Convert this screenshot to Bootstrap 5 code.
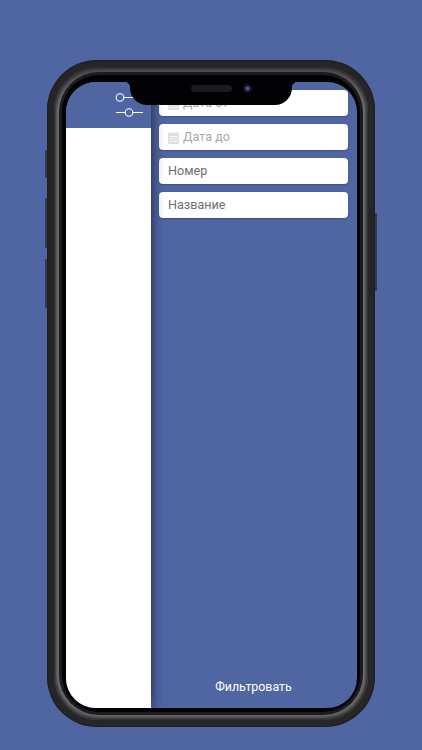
<!DOCTYPE html>
<html lang="ru">
<head>
<meta charset="utf-8">
<title>Фильтр</title>
<link href="https://cdn.jsdelivr.net/npm/bootstrap@5.3.0/dist/css/bootstrap.min.css" rel="stylesheet">
<style>
html,body{height:750px;overflow:hidden}
body{background:#4f66a3;font-family:Roboto,"Liberation Sans",sans-serif}
.stage{padding-top:60px}
.ph-outer{position:relative;width:328px;height:667px;border-radius:50px;background:#262628;padding:7px;box-shadow:inset 0 0 2px #111}
.ph-band{height:100%;border-radius:44px;background:linear-gradient(180deg,#4a4a4d 0,#6e6e71 6%,#6e6e71 94%,#626265 100%);padding:5px;box-shadow:inset 0 0 3px 2px #2c2c2e}
.ph-dark{height:100%;border-radius:40px;background:#1c1c1e;padding:3px}
.ph-black{height:100%;border-radius:37px;background:#020204;padding:7px 3px 4px 4px}
.screen{position:relative;width:291px;height:626px;border-radius:30px;overflow:hidden;background:#4f66a3}
.side-pane{width:85px;position:relative;z-index:1;box-shadow:1px 0 11px rgba(15,15,30,.7)}
.side-head{height:46px;background:#4f66a3;padding:8px 7px 0 0}
.side-body{background:#fff}
.filter-pane{padding:8px 9px 8px 8px}
.field-box{height:26px;padding:0 9px;border:0;border-radius:4px;background:#fff;color:#6f6f6f;font-size:12.6px;line-height:26px;box-shadow:0 1px 2px rgba(0,0,0,.2)}
.field-hint{color:#a8a8a8}
.cal-ico{width:11px;height:13px;flex:none}
.apply-btn{color:#fff;font-size:12.4px;line-height:16px;padding:5px 10px;border:0}
.apply-btn:hover{color:#fff}
.notch{position:absolute;z-index:3;top:0;left:64px;width:162px;height:23px;background:#020204;border-radius:0 0 17px 17px}
.notch::before,.notch::after{content:"";position:absolute;top:0;width:6px;height:6px}
.notch::before{left:-6px;background:radial-gradient(circle at 0 100%,transparent 6px,#020204 6.5px)}
.notch::after{right:-6px;background:radial-gradient(circle at 100% 100%,transparent 6px,#020204 6.5px)}
.speaker{position:absolute;left:61px;top:3px;width:41px;height:7px;border-radius:4px;background:#1b1b1f}
.camera{position:absolute;left:113px;top:2px;width:9px;height:9px;border-radius:50%;background:radial-gradient(circle,#4a5c8c 0 1.5px,#15161e 2.5px)}
.hw-key{position:absolute;width:2px;background:#343a52;border-radius:1px}
.k1{left:-2px;top:90px;height:28px}
.k2{left:-2px;top:138px;height:50px}
.k3{left:-2px;top:199px;height:49px}
.k4{right:-2px;top:153px;height:78px}
</style>
</head>
<body>
<div class="stage d-flex justify-content-center">
  <div class="ph-outer">
    <span class="hw-key k1"></span><span class="hw-key k2"></span><span class="hw-key k3"></span><span class="hw-key k4"></span>
    <div class="ph-band"><div class="ph-dark"><div class="ph-black">
      <div class="screen d-flex">
        <div class="notch"><span class="speaker"></span><span class="camera"></span></div>
        <aside class="side-pane d-flex flex-column flex-shrink-0">
          <div class="side-head d-flex justify-content-end">
            <svg width="29" height="28" viewBox="0 0 29 28" fill="none" stroke="#fff" stroke-width="1.1" aria-hidden="true">
              <path d="M9 7.5H28M1 22.5H10M18 22.5H28"/>
              <circle cx="5" cy="7.5" r="3.8"/>
              <circle cx="14" cy="22.5" r="3.8"/>
            </svg>
          </div>
          <div class="side-body flex-grow-1"></div>
        </aside>
        <main class="filter-pane flex-grow-1 d-flex flex-column gap-2">
          <div class="field-box form-control d-flex align-items-center gap-1"><svg class="cal-ico" viewBox="0 0 11 13" aria-hidden="true"><rect y="1.5" width="11" height="11.5" rx="1.5" fill="#dedede"/><path d="M1 5.5H10M1 8H10M1 10.5H10" stroke="#fff" stroke-width=".7"/></svg><span class="field-hint">Дата от</span></div>
          <div class="field-box form-control d-flex align-items-center gap-1"><svg class="cal-ico" viewBox="0 0 11 13" aria-hidden="true"><rect y="1.5" width="11" height="11.5" rx="1.5" fill="#dedede"/><path d="M1 5.5H10M1 8H10M1 10.5H10" stroke="#fff" stroke-width=".7"/></svg><span class="field-hint">Дата до</span></div>
          <div class="field-box form-control">Номер</div>
          <div class="field-box form-control">Название</div>
          <button type="button" class="btn apply-btn mt-auto align-self-center">Фильтровать</button>
        </main>
      </div>
    </div></div></div>
  </div>
</div>
<script src="https://cdn.jsdelivr.net/npm/bootstrap@5.3.0/dist/js/bootstrap.bundle.min.js"></script>
</body>
</html>
